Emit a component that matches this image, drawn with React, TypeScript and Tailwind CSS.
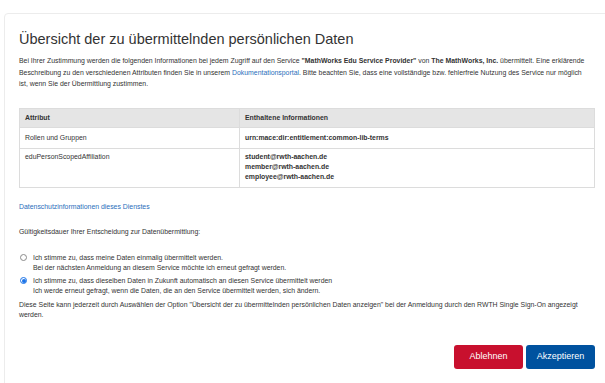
import React from "react";

const rows: { attr: string; values: string[]; top: string }[] = [
  { attr: "Rollen und Gruppen", values: ["urn:mace:dir:entitlement:common-lib-terms"], top: "pt-[5px]" },
  {
    attr: "eduPersonScopedAffiliation",
    values: ["student@rwth-aachen.de", "member@rwth-aachen.de", "employee@rwth-aachen.de"],
    top: "pt-[3px]",
  },
];

function Radio({ checked }: { checked?: boolean }) {
  return (
    <span
      className={
        checked
          ? "mt-[1.5px] flex h-[7px] w-[7px] shrink-0 items-center justify-center rounded-full border border-[#1a73e8] bg-white"
          : "mt-[1.5px] flex h-[7px] w-[7px] shrink-0 items-center justify-center rounded-full border border-[#8a8a8a] bg-white"
      }
    >
      {checked && <span className="h-[4px] w-[4px] rounded-full bg-[#1a73e8]" />}
    </span>
  );
}

export default function App() {
  return (
    <div className="h-screen w-full overflow-hidden bg-white font-['Liberation_Sans',Arial,sans-serif] text-[#333]">
      <div className="ml-[4px] mt-[13px] h-[420px] w-[640px] rounded-[4px] border border-[#ececec] pl-[14px] pt-[15px]">
        <h1 className="text-[14.5px] leading-[20px] text-[#333]">
          Übersicht der zu übermittelnden persönlichen Daten
        </h1>

        <p className="mt-[6px] whitespace-nowrap text-[6.9px] leading-[11.5px]">
          Bei Ihrer Zustimmung werden die folgenden Informationen bei jedem Zugriff auf den Service{" "}
          <b>"MathWorks Edu Service Provider"</b> von <b>The MathWorks, Inc.</b> übermittelt. Eine
          erklärende
          <br />
          Beschreibung zu den verschiedenen Attributen finden Sie in unserem{" "}
          <span className="text-[#2a6ebb]">Dokumentationsportal</span>. Bitte beachten Sie, dass eine
          vollständige bzw. fehlerfreie Nutzung des Service nur möglich
          <br />
          ist, wenn Sie der Übermittlung zustimmen.
        </p>

        <table className="mt-[18px] w-[576px] border-collapse text-[6.9px] leading-[10px]">
          <thead>
            <tr className="bg-[#e5e5e5]">
              <th className="h-[19px] w-[220px] border border-[#dcdcdc] px-[5px] text-left font-bold">
                Attribut
              </th>
              <th className="border border-[#dcdcdc] px-[5px] text-left font-bold">
                Enthaltene Informationen
              </th>
            </tr>
          </thead>
          <tbody>
            {rows.map((r) => (
              <tr key={r.attr}>
                <td className={`border border-[#dcdcdc] px-[5px] pb-[5px] align-top ${r.top}`}>
                  {r.attr}
                </td>
                <td className={`border border-[#dcdcdc] px-[5px] pb-[5px] align-top font-bold ${r.top}`}>
                  {r.values.map((v) => (
                    <div key={v}>{v}</div>
                  ))}
                </td>
              </tr>
            ))}
          </tbody>
        </table>

        <div className="mt-[14px] text-[6.9px] leading-[10px] text-[#2a6ebb]">
          Datenschutzinformationen dieses Dienstes
        </div>

        <div className="mt-[15px] text-[6.9px] leading-[10px]">
          Gültigkeitsdauer Ihrer Entscheidung zur Datenübermittlung:
        </div>

        <div className="mt-[16px] flex flex-col gap-[3px] text-[6.9px] leading-[10px]">
          <div className="flex items-start gap-[6px] pl-[1px]">
            <Radio />
            <div>
              <div>Ich stimme zu, dass meine Daten einmalig übermittelt werden.</div>
              <div>Bei der nächsten Anmeldung an diesem Service möchte ich erneut gefragt werden.</div>
            </div>
          </div>
          <div className="flex items-start gap-[6px] pl-[1px]">
            <Radio checked />
            <div>
              <div>
                Ich stimme zu, dass dieselben Daten in Zukunft automatisch an diesen Service übermittelt
                werden
              </div>
              <div>Ich werde erneut gefragt, wenn die Daten, die an den Service übermittelt werden, sich ändern.</div>
            </div>
          </div>
        </div>

        <p className="mt-[4px] whitespace-nowrap text-[6.9px] leading-[10px]">
          Diese Seite kann jederzeit durch Auswählen der Option "Übersicht der zu übermittelnden
          persönlichen Daten anzeigen" bei der Anmeldung durch den RWTH Single Sign-On angezeigt
          <br />
          werden.
        </p>

        <div className="mt-[25px] flex w-[576px] justify-end gap-[3px]">
          <button className="h-[24px] w-[69px] rounded-[3px] bg-[#c8102e] text-[9px] text-white">
            Ablehnen
          </button>
          <button className="h-[24px] w-[69px] rounded-[3px] bg-[#00529f] text-[9px] text-white">
            Akzeptieren
          </button>
        </div>
      </div>
    </div>
  );
}
